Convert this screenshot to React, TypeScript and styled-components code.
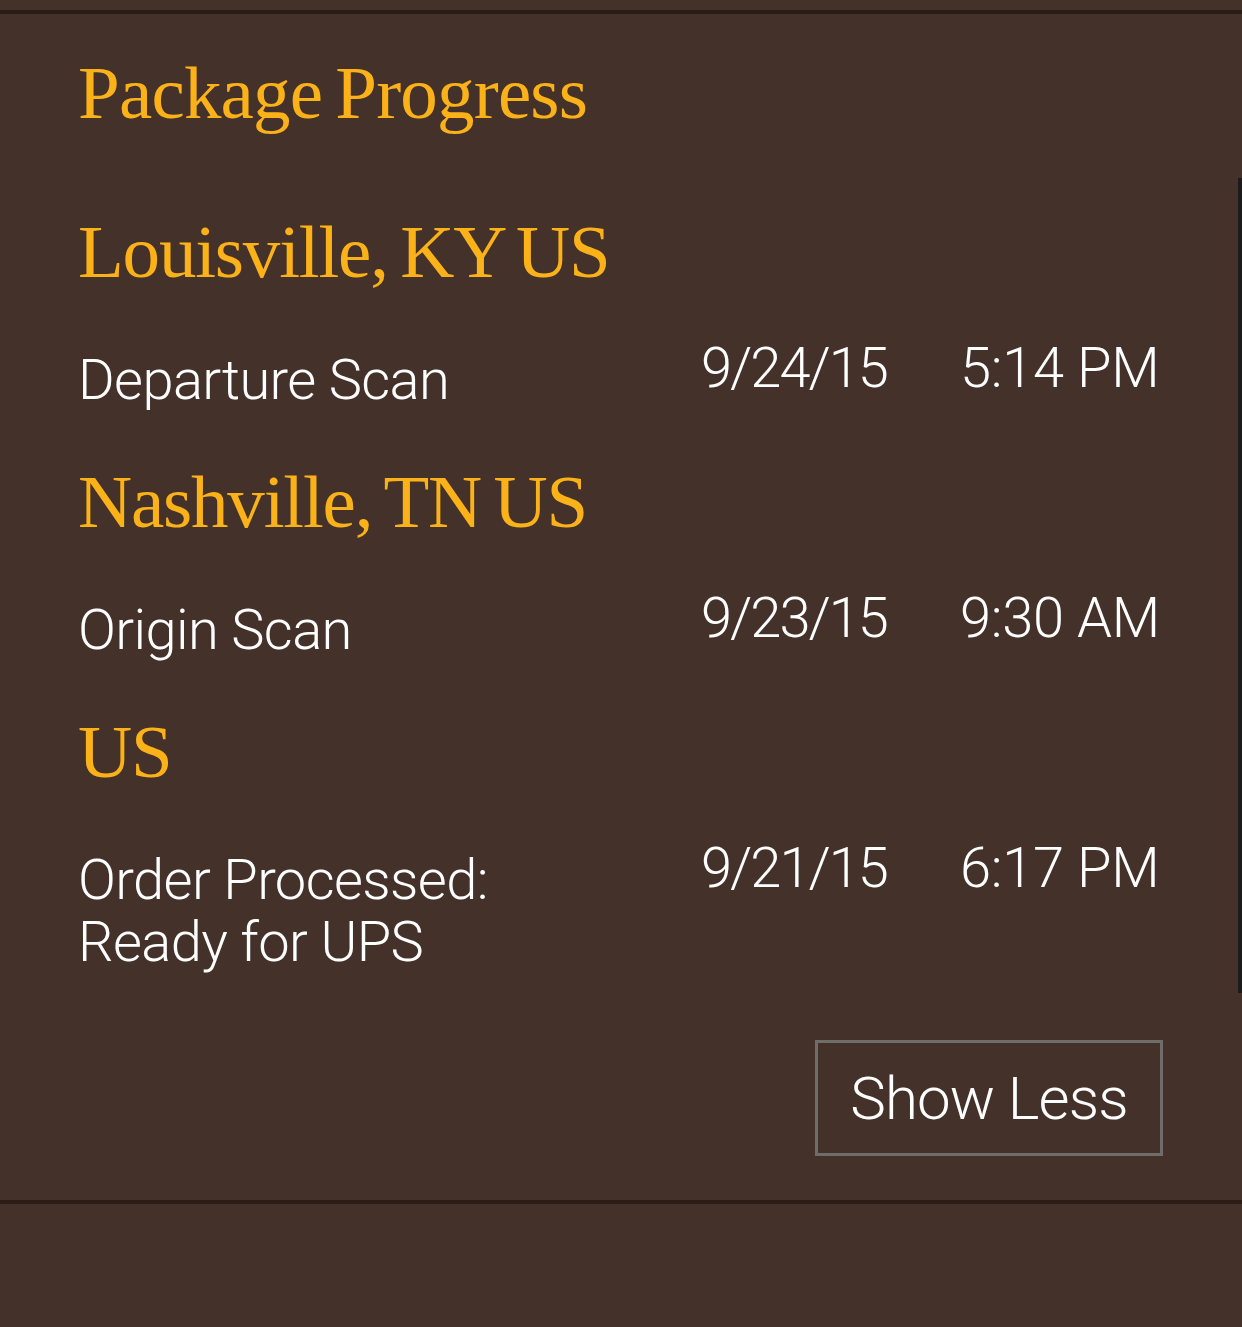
import React from "react";
import styled, { createGlobalStyle } from "styled-components";

const Global = createGlobalStyle`
  html, body {
    margin: 0;
    padding: 0;
    background: #44322a;
  }
  body {
    font-family: "Liberation Sans", Arial, sans-serif;
    -webkit-font-smoothing: antialiased;
  }
`;

const Page = styled.div`
  width: 1242px;
  min-height: 1327px;
  background: #44322a;
  padding-top: 10px;
  box-sizing: border-box;
`;

const Rule = styled.div`
  height: 4px;
  background: #2b1d15;
`;

const Panel = styled.section`
  position: relative;
  padding: 42px 79px 44px 78px;
  display: flex;
  flex-direction: column;
`;

const ScrollEdge = styled.div`
  position: absolute;
  right: 0;
  top: 164px;
  width: 4px;
  height: 815px;
  background: #1c1b1c;
`;

const Title = styled.h2`
  margin: 0;
  font-family: "Liberation Serif", "Times New Roman", serif;
  font-weight: 400;
  font-size: 75px;
  line-height: 74px;
  letter-spacing: -0.8px;
  word-spacing: -5px;
  color: #fbb218;
`;

const Location = styled(Title).attrs({ as: "h3" })<{ $first?: boolean }>`
  margin-top: ${(p) => (p.$first ? "85px" : "54px")};
  letter-spacing: -1.2px;
  word-spacing: -5px;
`;

const ScanRow = styled.div`
  display: grid;
  grid-template-columns: 623px 259px auto;
  margin-top: 48px;
  color: #ffffff;
  font-family: Roboto, "Liberation Sans", Arial, sans-serif;
  font-weight: 300;
  font-size: 56px;
  line-height: 62px;
`;

const Desc = styled.div`
  padding-top: 12px;
  letter-spacing: -0.6px;
`;

const Stamp = styled.div<{ $tight?: boolean }>`
  white-space: nowrap;
  letter-spacing: ${(p) => (p.$tight ? "-2px" : "-0.3px")};
`;

const ButtonRow = styled.div`
  display: flex;
  justify-content: flex-end;
  margin-top: 67px;
`;

const ShowLess = styled.button`
  width: 348px;
  height: 116px;
  box-sizing: border-box;
  border: 3px solid #706c6a;
  background: transparent;
  color: #ffffff;
  font-family: Roboto, "Liberation Sans", Arial, sans-serif;
  font-weight: 300;
  font-size: 60px;
  letter-spacing: -0.9px;
  padding: 0;
  cursor: pointer;
`;

type Scan = {
  location: string;
  lines: string[];
  date: string;
  time: string;
};

const scans: Scan[] = [
  { location: "Louisville, KY US", lines: ["Departure Scan"], date: "9/24/15", time: "5:14 PM" },
  { location: "Nashville, TN US", lines: ["Origin Scan"], date: "9/23/15", time: "9:30 AM" },
  { location: "US", lines: ["Order Processed:", "Ready for UPS"], date: "9/21/15", time: "6:17 PM" },
];

export default function App() {
  return (
    <Page>
      <Global />
      <Rule />
      <Panel>
        <ScrollEdge />
        <Title>Package Progress</Title>
        {scans.map((s, i) => (
          <React.Fragment key={s.location}>
            <Location $first={i === 0}>{s.location}</Location>
            <ScanRow>
              <Desc>
                {s.lines.map((l) => (
                  <div key={l}>{l}</div>
                ))}
              </Desc>
              <Stamp $tight>{s.date}</Stamp>
              <Stamp>{s.time}</Stamp>
            </ScanRow>
          </React.Fragment>
        ))}
        <ButtonRow>
          <ShowLess>Show Less</ShowLess>
        </ButtonRow>
      </Panel>
      <Rule />
    </Page>
  );
}
